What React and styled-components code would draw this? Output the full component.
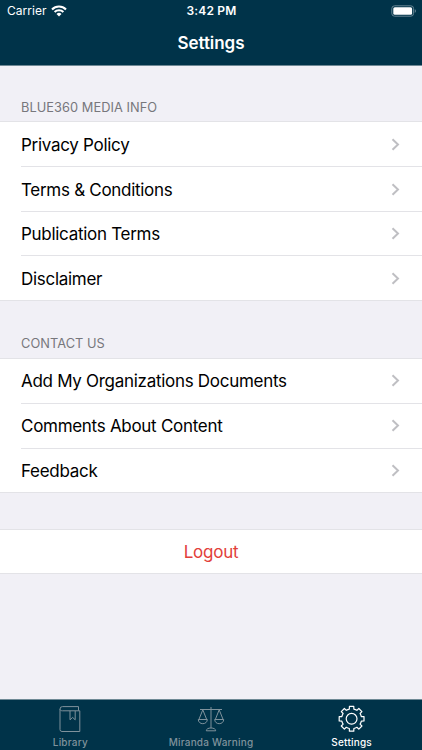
import React from "react";
import styled, { createGlobalStyle, ThemeProvider } from "styled-components";

const theme = {
  colors: {
    navy: "#003349",
    background: "#f1f0f6",
    line: "#e3e3e7",
    chevron: "#bfbfc3",
    muted: "#77777c",
    inactive: "#7f929c",
    danger: "#e2403a",
  },
};

const GlobalStyle = createGlobalStyle`
* {
  box-sizing: border-box;
}
body {
  margin: 0;
  font-family: Inter, "Liberation Sans", sans-serif;
}
`;
const StyledScreen = styled.div`
display: flex;
flex-direction: column;
width: 100%;
height: 100vh;
overflow: hidden;
background-color: ${({ theme }) => theme.colors.background};
`;
const StyledHeader = styled.header`
flex: none;
height: 66px;
color: white;
background-color: ${({ theme }) => theme.colors.navy};
border-bottom: 1px solid #6f8995;
`;
const StyledStatusBar = styled.div`
display: grid;
grid-template-columns: 1fr auto 1fr;
align-items: center;
height: 22px;
padding: 0 6px 0 7px;
font-size: 12px;
line-height: 22px;
`;
const StyledCarrier = styled.div`
display: flex;
align-items: center;
gap: 5px;
letter-spacing: 0.02px;
svg {
  margin-top: -1px;
}
`;
const StyledTime = styled.div`
font-weight: 600;
letter-spacing: 0.2px;
`;
const StyledBattery = styled.svg`
justify-self: end;
margin-top: -1px;
`;
const StyledTitle = styled.h1`
margin: 0;
font-size: 17px;
font-weight: 600;
line-height: 43px;
letter-spacing: -0.05px;
text-align: center;
`;
const StyledMain = styled.main`
flex: 1;
min-height: 0;
`;
const StyledLabel = styled.h2`
margin: 0;
padding: ${({ $top }) => $top}px 21px ${({ $bottom }) => $bottom}px;
color: ${({ theme }) => theme.colors.muted};
font-size: 12.8px;
font-weight: 400;
line-height: 16px;
letter-spacing: 0.06px;
`;
const StyledList = styled.ul`
margin: 0;
padding: 0;
list-style: none;
background-color: white;
border-top: 1px solid ${({ theme }) => theme.colors.line};
border-bottom: 1px solid ${({ theme }) => theme.colors.line};
`;
const StyledRow = styled.li`
display: flex;
align-items: center;
justify-content: space-between;
height: 44.75px;
margin-left: 21px;
padding: ${({ $inset }) => $inset}px 22px 0 0;
font-size: 17px;
letter-spacing: -0.29px;
border-bottom: 1px solid ${({ theme }) => theme.colors.line};
&:last-child {
  height: 43.75px;
  border-bottom: none;
}
`;
const StyledLogout = styled.button`
display: block;
width: 100%;
height: 45px;
margin-top: 36px;
padding: 0;
color: ${({ theme }) => theme.colors.danger};
background-color: white;
border: solid ${({ theme }) => theme.colors.line};
border-width: 1px 0;
font-family: inherit;
font-size: 17px;
letter-spacing: -0.25px;
`;
const StyledTabBar = styled.nav`
display: grid;
grid-template-columns: repeat(3, 1fr);
flex: none;
height: 51px;
background-color: ${({ theme }) => theme.colors.navy};
border-top: 1px solid #6f8995;
`;
const StyledTab = styled.div`
display: flex;
flex-direction: column;
align-items: center;
padding-top: 5px;
color: ${({ theme, $active }) => ($active ? "white" : theme.colors.inactive)};
font-size: 10px;
font-weight: 500;
line-height: 14px;
letter-spacing: 0.2px;
svg {
  margin-bottom: 2px;
}
`;

const Wifi = () => (
  <svg width="16" height="12" viewBox="0 0 16 12" fill="none" stroke="white" strokeWidth="2.1">
    <path d="M1 4.4a10 10 0 0 1 14 0" />
    <path d="M3.6 7.1a6.3 6.3 0 0 1 8.8 0" />
    <path d="M8 11.5 5.5 9a3.6 3.6 0 0 1 5 0z" fill="white" stroke="none" />
  </svg>
);

const Battery = () => (
  <StyledBattery width="25" height="12" viewBox="0 0 25 12">
    <rect x="0.8" y="0.8" width="21.8" height="10.4" rx="2.8" fill="none" stroke="#668594" />
    <rect x="2.3" y="2.2" width="18.8" height="7.6" rx="1.5" fill="white" />
    <path d="M23.8 4.3v3.6c1.3-.5 1.3-3.1 0-3.6z" fill="#7e98a4" />
  </StyledBattery>
);

const Chevron = () => (
  <svg width="9" height="14" viewBox="0 0 9 14" fill="none" stroke={theme.colors.chevron} strokeWidth="2">
    <path d="M1.5 1.2 7 6.5l-5.5 5.3" />
  </svg>
);

const Book = () => (
  <svg width="28" height="28" viewBox="0 0 28 28" fill="none" stroke="currentColor" strokeLinejoin="round">
    <path d="M6.5 5.8h17.3v20.7H6a2 2 0 0 1-2-2V4.2a2.5 2.5 0 0 1 2.5-2.6h16v4" />
    <path d="M4 4.2c0 1 1 1.6 2.5 1.6" />
    <path d="M14 5.8v9l2.6-2.4 2.6 2.4v-9" />
  </svg>
);

const Scales = () => (
  <svg width="28" height="28" viewBox="0 0 28 28" fill="none" stroke="currentColor" strokeLinejoin="round">
    <path d="M3 4.5h22M14 2v21" />
    <path d="M5.8 4.8 1.9 14.5M5.8 4.8l3.9 9.7M1.3 14.5h9c0 2.5-2 4.2-4.5 4.2s-4.5-1.7-4.5-4.2z" />
    <path d="m22.2 4.8-3.9 9.7M22.2 4.8l3.9 9.7M17.7 14.5h9c0 2.5-2 4.2-4.5 4.2s-4.5-1.7-4.5-4.2z" />
    <path d="M9.3 25.8c0-1.8 2-2.8 4.7-2.8s4.7 1 4.7 2.8z" />
  </svg>
);

// eight teeth with flat tops, joined by arcs of the gear's body
const gearPoint = (angle, radius) => {
  const radians = (angle * Math.PI) / 180;
  return `${(14 + radius * Math.sin(radians)).toFixed(2)} ${(14 - radius * Math.cos(radians)).toFixed(2)}`;
};
const gearPath = [0, 45, 90, 135, 180, 225, 270, 315]
  .map((angle, i) => {
    const start = i === 0 ? "M" : "A10 10 0 0 1 ";
    return `${start}${gearPoint(angle - 13, 10)}L${gearPoint(angle - 10, 12.6)}L${gearPoint(angle + 10, 12.6)}L${gearPoint(angle + 13, 10)}`;
  })
  .join("");

const Gear = () => (
  <svg width="28" height="28" viewBox="0.4 0.2 28 28" fill="none" stroke="currentColor" strokeWidth="1.2" strokeLinejoin="round">
    <path d={`${gearPath}A10 10 0 0 1 ${gearPoint(-13, 10)}z`} />
    <circle cx="14" cy="14" r="5.4" />
  </svg>
);

const infoRows = ["Privacy Policy", "Terms & Conditions", "Publication Terms", "Disclaimer"];
const contactRows = ["Add My Organizations Documents", "Comments About Content", "Feedback"];

const Section = ({ label, top, bottom, inset, rows }) => (
  <section>
    <StyledLabel $top={top} $bottom={bottom}>{label}</StyledLabel>
    <StyledList>
      {rows.map((row) => (
        <StyledRow key={row} $inset={inset}>
          <span>{row}</span>
          <Chevron />
        </StyledRow>
      ))}
    </StyledList>
  </section>
);

const App = () => (
  <ThemeProvider theme={theme}>
    <GlobalStyle />
    <StyledScreen>
      <StyledHeader>
        <StyledStatusBar>
          <StyledCarrier>
            Carrier
            <Wifi />
          </StyledCarrier>
          <StyledTime>3:42 PM</StyledTime>
          <Battery />
        </StyledStatusBar>
        <StyledTitle>Settings</StyledTitle>
      </StyledHeader>
      <StyledMain>
        <Section label="BLUE360 MEDIA INFO" top={33.5} bottom={5.5} inset={2} rows={infoRows} />
        <Section label="CONTACT US" top={35} bottom={6} inset={1} rows={contactRows} />
        <StyledLogout>Logout</StyledLogout>
      </StyledMain>
      <StyledTabBar>
        <StyledTab>
          <Book />
          Library
        </StyledTab>
        <StyledTab>
          <Scales />
          Miranda Warning
        </StyledTab>
        <StyledTab $active>
          <Gear />
          Settings
        </StyledTab>
      </StyledTabBar>
    </StyledScreen>
  </ThemeProvider>
);

export default App;
